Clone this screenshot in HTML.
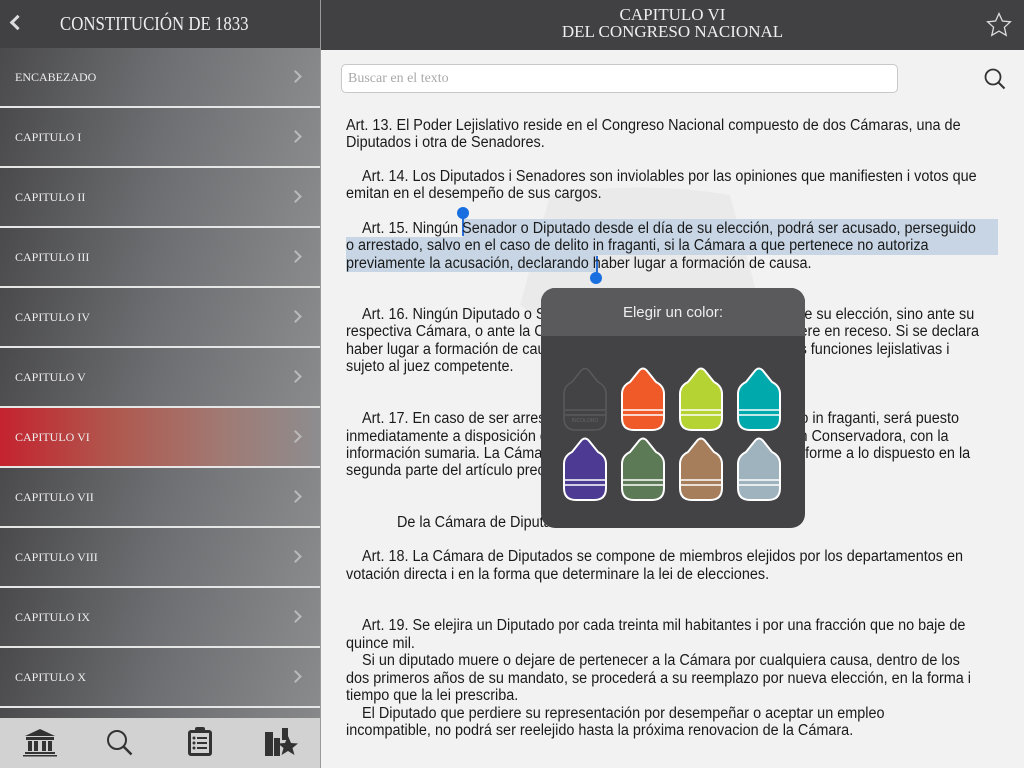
<!DOCTYPE html>
<html><head><meta charset="utf-8"><style>
*{margin:0;padding:0;box-sizing:border-box}
body{width:1024px;height:768px;overflow:hidden;background:#f2f2f2;position:relative;font-family:"Liberation Sans",sans-serif}
.hdr{position:absolute;top:0;height:50px;background:#414143;color:#eee;font-family:"Liberation Serif",serif;text-align:center}
.side{position:absolute;left:0;top:48px;width:320px;height:670px;overflow:hidden;background:#e6e6e6}
.row{position:absolute;left:0;width:320px;height:58px;background:linear-gradient(110deg,#4a4a4c 0%,#6e6f72 50%,#8a8b8d 100%);color:#eee;font-family:"Liberation Serif",serif;font-size:12px}
.row span{position:absolute;left:15px;top:22px}
.row i{position:absolute;right:20px;top:24px;width:9px;height:9px;border-right:2px solid #bbb;border-top:2px solid #bbb;transform:rotate(45deg)}
.l{position:absolute;left:346px;font-size:15.5px;line-height:18px;color:#1a1a1a;white-space:nowrap;transform:scaleX(0.93);transform-origin:0 0}
.hl{position:absolute;background:#c7d5e4}
.tab{position:absolute;left:0;top:718px;width:320px;height:50px;background:#d2d2d2}
</style></head><body>
<div class="hdr" style="left:0;width:320px">
<div style="position:absolute;left:12px;top:17px;width:11px;height:11px;border-left:3px solid #ddd;border-bottom:3px solid #ddd;transform:rotate(45deg)"></div>
<div style="position:absolute;left:60px;top:13px;font-size:20px;white-space:nowrap;transform:scaleX(0.84);transform-origin:0 0">CONSTITUCIÓN DE 1833</div></div>
<div class="hdr" style="left:321px;width:703px;font-size:17px;line-height:17px;padding-top:6px">CAPITULO VI<br>DEL CONGRESO NACIONAL
<svg style="position:absolute;right:12px;top:12px" width="26" height="26" viewBox="0 0 26 26"><path d="M13 1.5l3.4 7.5 8 .8-6 5.5 1.8 8-7.2-4.2-7.2 4.2 1.8-8-6-5.5 8-.8z" fill="none" stroke="#ddd" stroke-width="1.3"/></svg></div>
<div style="position:absolute;left:320px;top:0;width:1px;height:768px;background:#999"></div>
<div class="side">
<div class="row" style="top:0"><span>ENCABEZADO</span><i></i></div>
<div class="row" style="top:60px"><span>CAPITULO I</span><i></i></div>
<div class="row" style="top:120px"><span>CAPITULO II</span><i></i></div>
<div class="row" style="top:180px"><span>CAPITULO III</span><i></i></div>
<div class="row" style="top:240px"><span>CAPITULO IV</span><i></i></div>
<div class="row" style="top:300px"><span>CAPITULO V</span><i></i></div>
<div class="row" style="top:360px;background:linear-gradient(90deg,#c4232f 0%,#b0574d 35%,#a07a74 70%,#8d8d8f 100%)"><span>CAPITULO VI</span><i></i></div>
<div class="row" style="top:420px"><span>CAPITULO VII</span><i></i></div>
<div class="row" style="top:480px"><span>CAPITULO VIII</span><i></i></div>
<div class="row" style="top:540px"><span>CAPITULO IX</span><i></i></div>
<div class="row" style="top:600px"><span>CAPITULO X</span><i></i></div>
<div class="row" style="top:660px"></div>
</div>
<div class="tab">
<svg style="position:absolute;left:22px;top:10px" width="36" height="30" viewBox="0 0 36 30"><path d="M18 1L3 8h30z" fill="#333"/><rect x="4" y="9" width="28" height="3" fill="#333"/><rect x="6" y="13" width="4" height="10" fill="#333"/><rect x="12" y="13" width="4" height="10" fill="#333"/><rect x="20" y="13" width="4" height="10" fill="#333"/><rect x="26" y="13" width="4" height="10" fill="#333"/><rect x="3" y="24" width="30" height="2" fill="#333"/><rect x="1" y="27" width="34" height="1.5" fill="#333"/></svg>
<svg style="position:absolute;left:105px;top:10px" width="30" height="30" viewBox="0 0 30 30"><circle cx="12" cy="12" r="9" fill="none" stroke="#333" stroke-width="2"/><path d="M18.5 18.5l8 8" stroke="#333" stroke-width="2.5"/></svg>
<svg style="position:absolute;left:186px;top:7px" width="28" height="32" viewBox="0 0 28 32"><rect x="2" y="5" width="24" height="26" rx="3" fill="#333"/><rect x="5" y="8" width="18" height="20" fill="#d2d2d2"/><rect x="9" y="2" width="10" height="6" rx="2" fill="#333"/><g fill="#333"><circle cx="8" cy="13" r="1.5"/><circle cx="8" cy="18" r="1.5"/><circle cx="8" cy="23" r="1.5"/><rect x="11" y="12" width="10" height="2"/><rect x="11" y="17" width="10" height="2"/><rect x="11" y="22" width="10" height="2"/></g></svg>
<svg style="position:absolute;left:263px;top:8px" width="36" height="32" viewBox="0 0 36 32"><rect x="2" y="6" width="8" height="24" fill="#333"/><rect x="11" y="12" width="6" height="18" fill="#333"/><rect x="19" y="2" width="6" height="12" fill="#333"/><path d="M25 10l3 7 7 .5-5.5 4.5 2 7-6.5-4-6.5 4 2-7-5.5-4.5 7-.5z" fill="#333"/></svg>
</div>
<div style="position:absolute;left:341px;top:64px;width:557px;height:29px;background:#fff;border:1px solid #c8c8c8;border-radius:5px;font-family:'Liberation Serif',serif;font-size:14px;color:#aaa;padding:6px 6px">Buscar en el texto</div>
<svg style="position:absolute;left:983px;top:67px" width="24" height="24" viewBox="0 0 24 24"><circle cx="10" cy="10" r="7.5" fill="none" stroke="#333" stroke-width="1.8"/><path d="M15.5 15.5l6 6" stroke="#333" stroke-width="2"/></svg>
<svg style="position:absolute;left:490px;top:185px" width="300" height="200" viewBox="0 0 300 200"><path d="M60 10 Q150 -5 240 10 L270 120 Q150 210 30 120Z" fill="#eaeaea"/></svg>
<div class="hl" style="left:463px;top:219px;width:535px;height:18px"></div>
<div class="hl" style="left:346px;top:237px;width:652px;height:18px"></div>
<div class="hl" style="left:346px;top:255px;width:251px;height:17px"></div>
<div style="position:absolute;left:462px;top:212px;width:2px;height:24px;background:#2a6fd6"></div>
<div style="position:absolute;left:457px;top:207px;width:12px;height:12px;border-radius:50%;background:#1a6fe0"></div>
<div style="position:absolute;left:596px;top:256px;width:2px;height:20px;background:#2a6fd6"></div>
<div style="position:absolute;left:590px;top:272px;width:12px;height:12px;border-radius:50%;background:#1a6fe0"></div>
<div class="l" style="top:117px">Art. 13. El Poder Lejislativo reside en el Congreso Nacional compuesto de dos Cámaras, una de</div>
<div class="l" style="top:134px">Diputados i otra de Senadores.</div>
<div class="l" style="top:168px">&nbsp;&nbsp;&nbsp;&nbsp;Art. 14. Los Diputados i Senadores son inviolables por las opiniones que manifiesten i votos que</div>
<div class="l" style="top:185px">emitan en el desempeño de sus cargos.</div>
<div class="l" style="top:220px">&nbsp;&nbsp;&nbsp;&nbsp;Art. 15. Ningún Senador o Diputado desde el día de su elección, podrá ser acusado, perseguido</div>
<div class="l" style="top:237px">o arrestado, salvo en el caso de delito in fraganti, si la Cámara a que pertenece no autoriza</div>
<div class="l" style="top:255px">previamente la acusación, declarando haber lugar a formación de causa.</div>
<div class="l" style="top:306px">&nbsp;&nbsp;&nbsp;&nbsp;Art. 16. Ningún Diputado o Senador podrá ser juzgado desde el día de su elección, sino ante su</div>
<div class="l" style="top:323px">respectiva Cámara, o ante la Comisión Conservadora, si aquella estuviere en receso. Si se declara</div>
<div class="l" style="top:341px">haber lugar a formación de causa, queda el acusado suspendido de sus funciones lejislativas i</div>
<div class="l" style="top:358px">sujeto al juez competente.</div>
<div class="l" style="top:410px">&nbsp;&nbsp;&nbsp;&nbsp;Art. 17. En caso de ser arrestado algún Diputado o Senador por delito in fraganti, será puesto</div>
<div class="l" style="top:428px">inmediatamente a disposición de la Cámara respectiva o de la Comisión Conservadora, con la</div>
<div class="l" style="top:445px">información sumaria. La Cámara o la Comisión procederá entonces conforme a lo dispuesto en la</div>
<div class="l" style="top:462px">segunda parte del artículo precedente.</div>
<div class="l" style="top:514px;left:397px">De la Cámara de Diputados</div>
<div class="l" style="top:548px">&nbsp;&nbsp;&nbsp;&nbsp;Art. 18. La Cámara de Diputados se compone de miembros elejidos por los departamentos en</div>
<div class="l" style="top:566px">votación directa i en la forma que determinare la lei de elecciones.</div>
<div class="l" style="top:617px">&nbsp;&nbsp;&nbsp;&nbsp;Art. 19. Se elejira un Diputado por cada treinta mil habitantes i por una fracción que no baje de</div>
<div class="l" style="top:635px">quince mil.</div>
<div class="l" style="top:652px">&nbsp;&nbsp;&nbsp;&nbsp;Si un diputado muere o dejare de pertenecer a la Cámara por cualquiera causa, dentro de los</div>
<div class="l" style="top:670px">dos primeros años de su mandato, se procederá a su reemplazo por nueva elección, en la forma i</div>
<div class="l" style="top:687px">tiempo que la lei prescriba.</div>
<div class="l" style="top:705px">&nbsp;&nbsp;&nbsp;&nbsp;El Diputado que perdiere su representación por desempeñar o aceptar un empleo</div>
<div class="l" style="top:722px">incompatible, no podrá ser reelejido hasta la próxima renovacion de la Cámara.</div>
<div style="position:absolute;left:541px;top:288px;width:264px;height:240px;border-radius:14px;background:#434345;overflow:hidden">
<div style="height:48px;background:#5a5a5c;color:#eee;font-family:'Liberation Sans',sans-serif;font-size:15px;text-align:center;line-height:50px">Elegir un color:</div>
</div>
<svg style="position:absolute;left:541px;top:288px" width="264" height="240" viewBox="0 0 264 240">
<defs><path id="c" d="M4 30 Q4 22 12 18 L20 8 Q25 1 30 8 L38 18 Q46 22 46 30 L46 54 Q46 66 34 66 L16 66 Q4 66 4 54Z"/></defs>
<g stroke="#fff" stroke-width="2">
<use href="#c" x="77" y="76" fill="#f05a28"/><use href="#c" x="135" y="76" fill="#b5d333"/><use href="#c" x="193" y="76" fill="#00a9ac"/>
<use href="#c" x="19" y="146" fill="#4d3a92"/><use href="#c" x="77" y="146" fill="#5b7a55"/><use href="#c" x="135" y="146" fill="#a77e5b"/><use href="#c" x="193" y="146" fill="#9fb3be"/>
</g>
<use href="#c" x="19" y="76" fill="none" stroke="#5a5a5c" stroke-width="1.5"/>
<g fill="none" stroke="#fff" stroke-width="1.5">
<path d="M82 122h40M82 127h40M140 122h40M140 127h40M198 122h40M198 127h40M24 192h40M24 197h40M82 192h40M82 197h40M140 192h40M140 197h40M198 192h40M198 197h40"/></g>
<path d="M24 122h40M24 127h40" stroke="#5a5a5c" stroke-width="1.5"/>
<text x="44" y="134" fill="#666" font-size="5" text-anchor="middle" font-family="Liberation Sans">INCOLORO</text>
</svg>
</body></html>
